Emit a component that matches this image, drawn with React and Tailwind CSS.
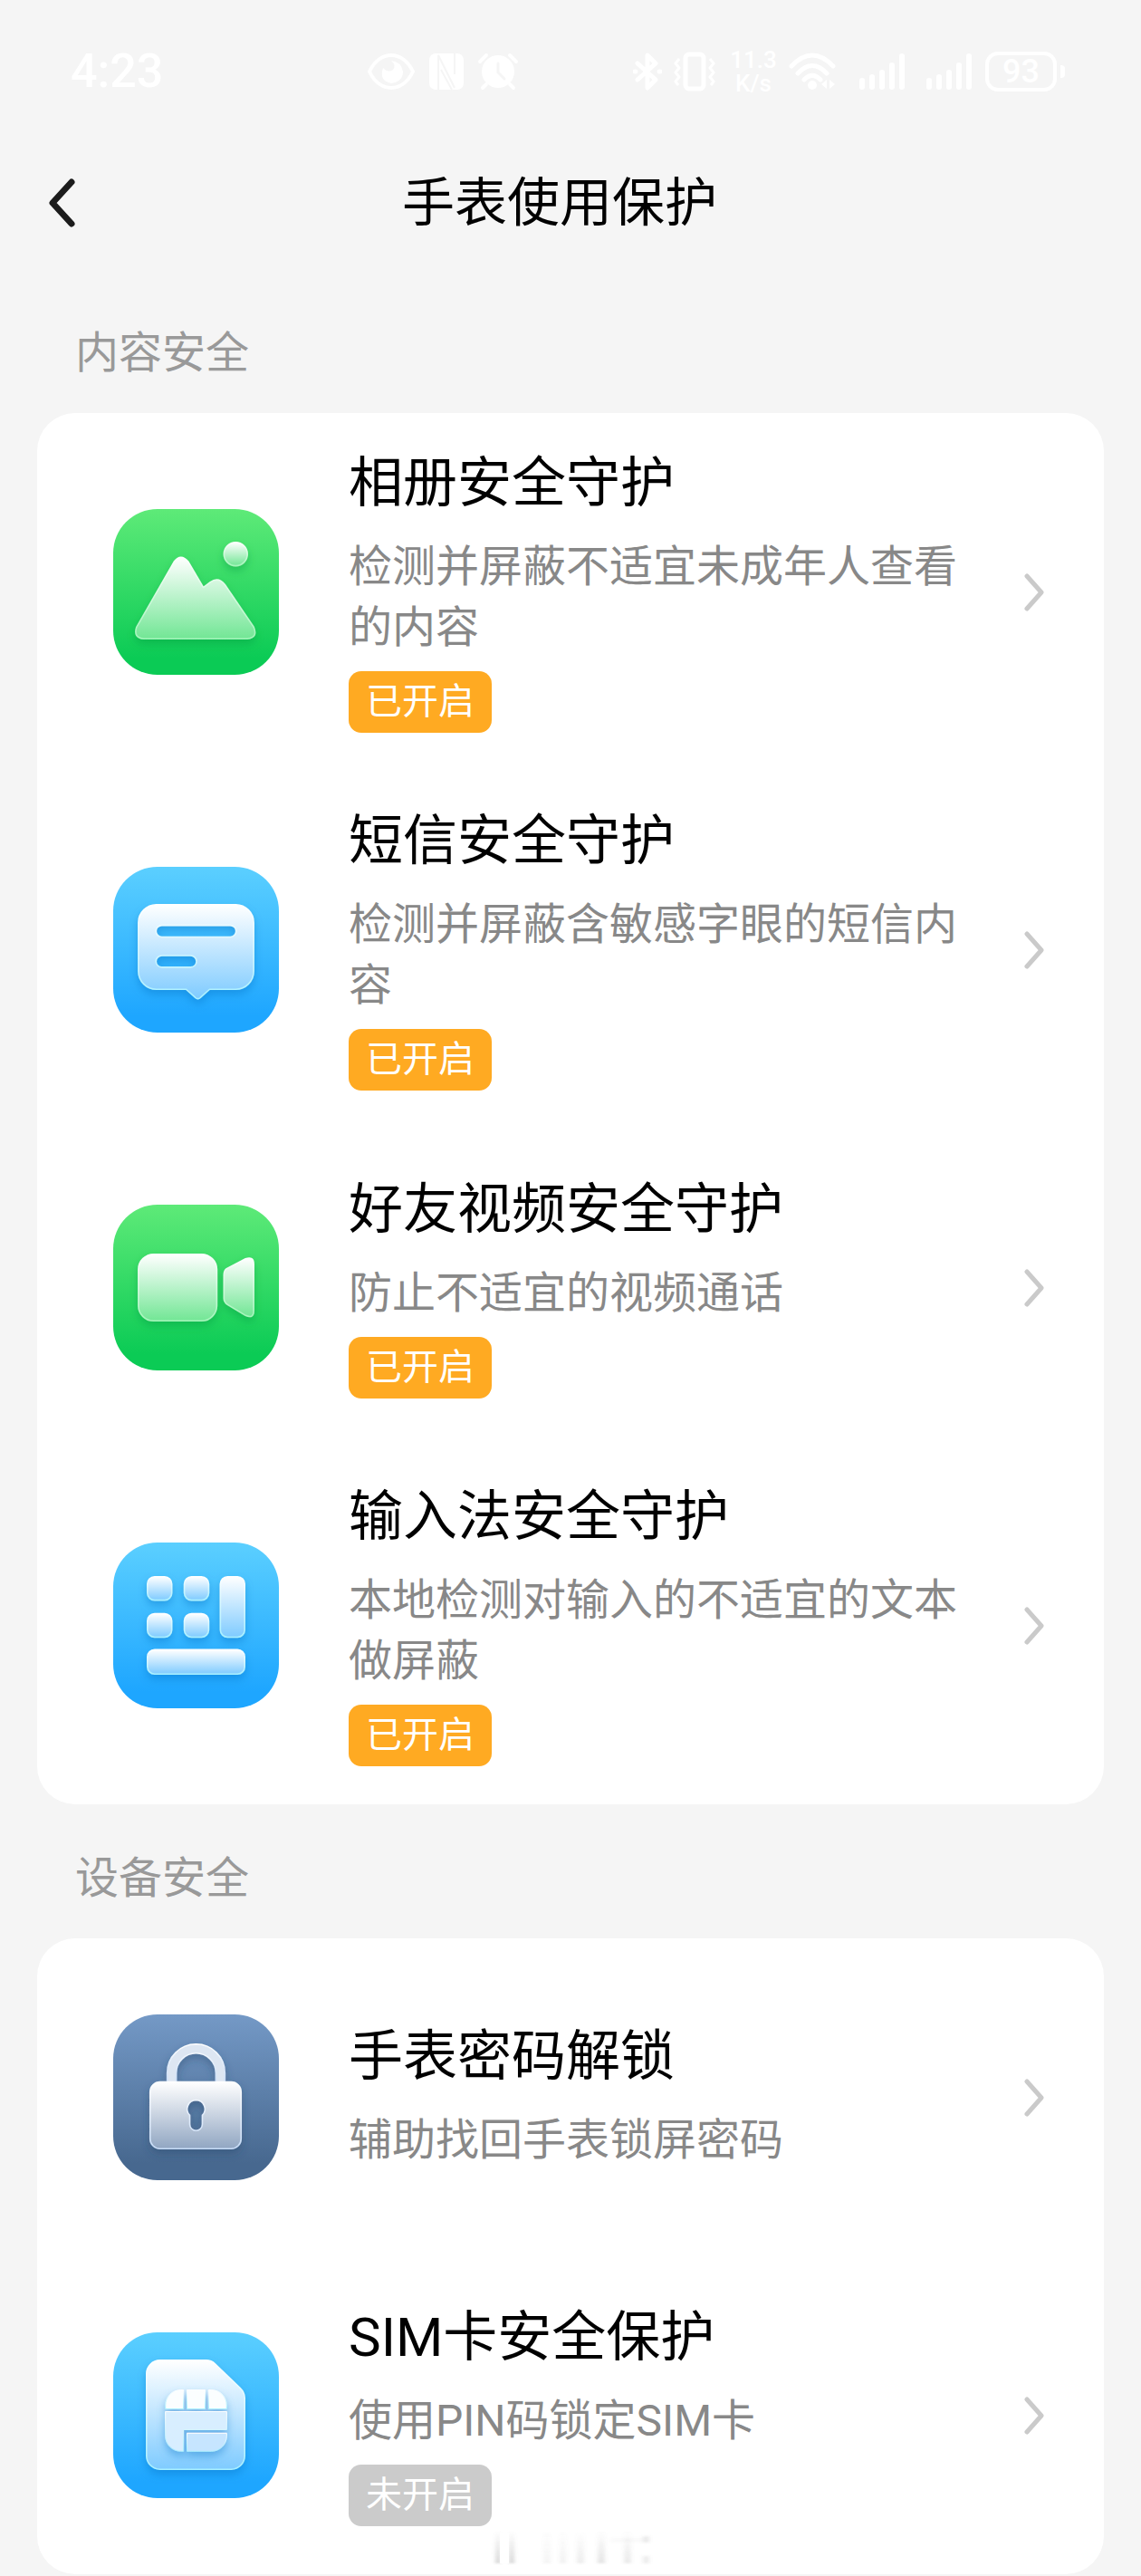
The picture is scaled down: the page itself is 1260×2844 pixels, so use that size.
const TONES = {
  green: { from: '#5eea78', to: '#0bcb55', glassTo: '#72e695', edge: '#a4f5bb', shadow: '#07963c' },
  blue: { from: '#5bcfff', to: '#1ea6ff', glassTo: '#7fcbff', edge: '#a8f0ff', shadow: '#0b6fc4' },
  slate: { from: '#7499c6', to: '#47688f', glassTo: '#91a6c2', edge: '#c7dcf7', shadow: '#2a4569' },
};

// Rounded gradient tile, the glyph inside is filled with a frosted glass gradient
function Tile({ id, tone, children }) {
  const t = TONES[tone];
  return (
    <svg viewBox="0 0 184 184" className="size-[183px] shrink-0" aria-hidden="true">
      <defs>
        <linearGradient id={`${id}-bg`} x1="0" y1="0" x2="0" y2="1">
          <stop offset="0" stopColor={t.from} />
          <stop offset="0.9" stopColor={t.to} />
        </linearGradient>
        <linearGradient id={`${id}-glass`} x1="0" y1="0" x2="0" y2="1">
          <stop offset="0" stopColor="#ffffff" />
          <stop offset="1" stopColor={t.glassTo} />
        </linearGradient>
        <linearGradient id={`${id}-edge`} x1="0" y1="0" x2="0" y2="1">
          <stop offset="0" stopColor="#ffffff" />
          <stop offset="1" stopColor={t.edge} />
        </linearGradient>
        <filter id={`${id}-shadow`} x="-30%" y="-30%" width="160%" height="170%">
          <feDropShadow dx="0" dy="5" stdDeviation="5" floodColor={t.shadow} floodOpacity="0.4" />
        </filter>
      </defs>
      <rect width="184" height="184" rx="49" fill={`url(#${id}-bg)`} />
      <g
        fill={`url(#${id}-glass)`}
        stroke={`url(#${id}-edge)`}
        strokeWidth="1.6"
        strokeLinejoin="round"
        filter={`url(#${id}-shadow)`}
      >
        {children}
      </g>
    </svg>
  );
}

function AlbumIcon() {
  return (
    <Tile id="album" tone="green">
      <path d="M68 58Q75 49 83 58L100 87L108 81Q117 75 124 84L156 131Q161 143 149 144H34Q22 143 26 131Z" />
      <circle cx="136" cy="50" r="13" />
    </Tile>
  );
}

function MessageIcon() {
  return (
    <Tile id="message" tone="blue">
      <path
        fillRule="evenodd"
        d="M48 42H136A20 20 0 0 1 156 62V116A20 20 0 0 1 136 136H107L97 145Q94 148 91 145L81 136H48A20 20 0 0 1 28 116V62A20 20 0 0 1 48 42ZM54 65A6.5 6.5 0 0 0 54 78H130A6.5 6.5 0 0 0 130 65ZM54 98.500A6.500 6.500 0 0 0 54 111.500H86A6.500 6.500 0 0 0 86 98.500Z"
      />
    </Tile>
  );
}

function VideoIcon() {
  return (
    <Tile id="video" tone="green">
      <rect x="28" y="55" width="87" height="74" rx="17" />
      <path d="M126 71L147 60Q156 57 156 66V118Q156 127 147 123L127 111Q123 108 123 104V78Q123 73 126 71Z" />
    </Tile>
  );
}

function KeyboardIcon() {
  return (
    <Tile id="keyboard" tone="blue">
      <rect x="38" y="38" width="27" height="26" rx="8" />
      <rect x="79" y="38" width="27" height="26" rx="8" />
      <rect x="119" y="38" width="27" height="67" rx="8" />
      <rect x="38" y="79" width="27" height="26" rx="8" />
      <rect x="79" y="79" width="27" height="26" rx="8" />
      <rect x="38" y="119" width="108" height="27" rx="8" />
    </Tile>
  );
}

function LockIcon() {
  return (
    <Tile id="lock" tone="slate">
      <path d="M60 76V65A32 32 0 0 1 124 65V76H114V65A22 22 0 0 0 70 65V76Z" fill="#dde6f2" />
      <path
        fillRule="evenodd"
        d="M52 75H131A11 11 0 0 1 142 86V138A11 11 0 0 1 131 149H52A11 11 0 0 1 41 138V86A11 11 0 0 1 52 75ZM92 95A10 10 0 0 0 85 112V122A7 7 0 0 0 99 122V112A10 10 0 0 0 92 95Z"
      />
    </Tile>
  );
}

function SimIcon() {
  return (
    <Tile id="sim" tone="blue">
      <path d="M52 31H103Q109 31 113 35L141 62Q146 67 146 73V137A15 15 0 0 1 131 152H52A15 15 0 0 1 37 137V46A15 15 0 0 1 52 31Z" />
      <g filter="url(#sim-shadow)" strokeWidth="1">
        <path d="M75 64H78V85H58V81A17 17 0 0 1 75 64Z" fill="#fbfeff" />
        <path d="M82 64H102V85H82Z" fill="#fbfeff" />
        <path d="M106 64H109A17 17 0 0 1 126 81V85H106Z" fill="#fbfeff" />
        <path d="M58 88H126V108H78V132H75A17 17 0 0 1 58 115Z" fill="#d8eeff" />
        <path d="M82 112H126V115A17 17 0 0 1 109 132H82Z" fill="#c6e5ff" />
      </g>
    </Tile>
  );
}

const SECTIONS = [
  {
    title: '内容安全',
    items: [
      { icon: AlbumIcon, name: '相册安全守护', desc: '检测并屏蔽不适宜未成年人查看的内容', status: 'on' },
      { icon: MessageIcon, name: '短信安全守护', desc: '检测并屏蔽含敏感字眼的短信内容', status: 'on' },
      { icon: VideoIcon, name: '好友视频安全守护', desc: '防止不适宜的视频通话', status: 'on' },
      { icon: KeyboardIcon, name: '输入法安全守护', desc: '本地检测对输入的不适宜的文本做屏蔽', status: 'on' },
    ],
  },
  {
    title: '设备安全',
    items: [
      { icon: LockIcon, name: '手表密码解锁', desc: '辅助找回手表锁屏密码' },
      { icon: SimIcon, name: 'SIM卡安全保护', desc: '使用PIN码锁定SIM卡', status: 'off' },
    ],
  },
];

function SignalIcon() {
  return (
    <svg viewBox="0 0 52 42" className="h-[42px] w-[52px]" stroke="currentColor" strokeWidth="6" strokeLinecap="round">
      <path d="M4 31V38M15 27V38M26 22V38M37 14V38M48 4V38" />
    </svg>
  );
}

function StatusBar() {
  return (
    <div className="flex h-[46px] items-center pl-[78px] pr-[84px] text-white">
      <div className="w-[327px] text-[52px] leading-[46px] font-medium">4:23</div>

      <div className="flex items-center gap-[14px]">
        <svg viewBox="0 0 54 42" className="h-[42px] w-[54px]" fill="none" stroke="currentColor" strokeWidth="4">
          <path d="M3 21C14 -3 40 -3 51 21C40 45 14 45 3 21Z" />
          <path d="M27 9Q33 14 29 19Q24 23 18 17Q13 31 27 34Q40 32 40 21Q38 10 27 9Z" fill="currentColor" stroke="none" />
        </svg>
        <svg viewBox="0 0 40 42" className="h-[42px] w-10">
          <rect x="1" y="1" width="38" height="40" rx="7" fill="currentColor" />
          <path d="M11 41V3L29 39M29 1V24M14 19L26 41" fill="none" stroke="#f5f5f5" strokeWidth="2" />
        </svg>
        <svg viewBox="0 0 46 42" className="h-[42px] w-[46px]" fill="none" stroke="currentColor" strokeWidth="4" strokeLinecap="round">
          <circle cx="23" cy="21" r="18" fill="currentColor" stroke="none" />
          <path d="M3 10L10 3M43 10L36 3M10 35L6 39M36 35L40 39" />
          <path d="M23 12V22L30 29" stroke="#f5f5f5" strokeWidth="3" />
        </svg>
      </div>

      <div className="ml-auto flex items-center">
        <svg viewBox="0 0 32 44" className="mr-[10px] h-11 w-8" fill="none" stroke="currentColor" strokeWidth="5" strokeLinejoin="round" strokeLinecap="round">
          <path d="M5 13L25 31L16 40V4L25 13L5 31M2 22H3M29 22H30" />
        </svg>
        <svg viewBox="0 0 52 44" className="mr-3 h-11 w-[52px]" fill="none" stroke="currentColor" strokeWidth="4" strokeLinejoin="round">
          <rect x="16" y="3" width="20" height="38" rx="4" strokeWidth="5" />
          <path d="M9 8L5 13L9 18L5 23L9 28L5 33L8 37M43 8L47 13L43 18L47 23L43 28L47 33L44 37" strokeWidth="3" />
        </svg>
        <div className="mr-3 flex w-[54px] flex-col items-center text-[26px] leading-[26px] font-medium">
          <span>11.3</span>
          <span>K/s</span>
        </div>
        <svg viewBox="0 0 52 42" className="mr-[25px] h-[42px] w-[52px]" fill="none" stroke="currentColor" strokeWidth="5" strokeLinecap="round">
          <path d="M3 15Q26 -9 49 15M10 23Q26 6 42 23M17 30Q26 21 35 30" />
          <circle cx="26" cy="36" r="5" fill="currentColor" stroke="none" />
          <path d="M42 30V40L36 35ZM45 30V40L51 35Z" fill="currentColor" stroke="none" />
        </svg>
        <div className="mr-[14px] flex gap-[22px]">
          <SignalIcon />
          <SignalIcon />
        </div>
        <div className="flex h-11 w-[79px] items-center justify-center rounded-[14px] border-4 border-white text-[36px] leading-9 font-medium">
          93
        </div>
        <div className="ml-1 h-[14px] w-[5px] rounded-r-sm bg-white"></div>
      </div>
    </div>
  );
}

function Header() {
  return (
    <header className="mt-[82px] flex h-20 items-center pl-[52px] pr-[108px]">
      <button type="button" aria-label="返回" className="shrink-0">
        <svg viewBox="0 0 32 56" className="h-14 w-8" fill="none" stroke="#1c1c1c" strokeWidth="7" strokeLinecap="round" strokeLinejoin="round">
          <path d="M27 5L6 28L27 51" />
        </svg>
      </button>
      <h1 className="flex-1 text-center text-[58px] leading-[80px]">手表使用保护</h1>
    </header>
  );
}

function GuardRow({ item }) {
  const Icon = item.icon;
  return (
    <button type="button" className="flex min-h-[351px] w-full items-center py-[42px] pl-[84px] pr-[66px] text-left">
      <Icon />
      <span className="ml-[77px] flex flex-1 flex-col items-start">
        <span className="text-[60px] leading-[72px] text-black">{item.name}</span>
        <span className="mt-[22px] text-[48px] leading-[67px] text-[#888888]">{item.desc}</span>
        {item.status && (
          <span
            className={`mt-[15px] rounded-[14px] px-[19px] text-[40px] leading-[68px] text-white ${item.status === 'on' ? 'bg-[#ffaa22]' : 'bg-[#cbcbcb]'}`}
          >
            {item.status === 'on' ? '已开启' : '未开启'}
          </span>
        )}
      </span>
      <svg viewBox="0 0 22 42" className="ml-[42px] h-[42px] w-[22px] shrink-0" fill="none" stroke="#cacaca" strokeWidth="5" strokeLinecap="round" strokeLinejoin="round">
        <path d="M3 3L19 21L3 39" />
      </svg>
    </button>
  );
}

// Faint blurred streaks over the foot of the last card
const STREAKS = [
  { x: 17, w: 6, o: 0.3 },
  { x: 32, w: 6, o: 0.3 },
  { x: 70, w: 8, o: 0.08 },
  { x: 88, w: 7, o: 0.1 },
  { x: 107, w: 8, o: 0.14 },
  { x: 130, w: 8, o: 0.2 },
  { x: 159, w: 8, o: 0.16 },
];

function Streaks() {
  return (
    <svg viewBox="0 0 210 60" className="pointer-events-none absolute bottom-0 left-1/2 -ml-[100px] h-[60px] w-[210px]" aria-hidden="true">
      <defs>
        <linearGradient id="streak" x1="0" y1="0" x2="0" y2="1">
          <stop offset="0" stopColor="#777777" stopOpacity="0" />
          <stop offset="1" stopColor="#777777" />
        </linearGradient>
        <filter id="soft" x="-10%" y="-10%" width="120%" height="120%">
          <feGaussianBlur stdDeviation="2 1" />
        </filter>
      </defs>
      <g filter="url(#soft)">
        {STREAKS.map((s) => (
          <rect key={s.x} x={s.x} y="10" width={s.w} height="36" fill="url(#streak)" opacity={s.o} />
        ))}
        <path d="M145 18H186V23H145Z" fill="#777777" opacity="0.04" />
        <path d="M180 16H187V23H180ZM180 38H187V46H180Z" fill="#777777" opacity="0.12" />
      </g>
      <rect x="22" y="12" width="10" height="34" fill="#ffffff" />
    </svg>
  );
}

export default function App() {
  return (
    <div className="relative min-h-screen bg-[#f5f5f5] pt-14 pb-[2px] font-[Roboto,'Noto_Sans_CJK_SC',sans-serif] text-black">
      <StatusBar />
      <Header />
      <main className="px-[41px] pt-11">
        {SECTIONS.map((section) => (
          <section key={section.title}>
            <h2 className="pt-12 pb-8 pl-[42px] text-[48px] leading-[68px] text-[#999999]">{section.title}</h2>
            <div className="rounded-[42px] bg-white">
              {section.items.map((item) => (
                <GuardRow key={item.name} item={item} />
              ))}
            </div>
          </section>
        ))}
      </main>
      <Streaks />
    </div>
  );
}
